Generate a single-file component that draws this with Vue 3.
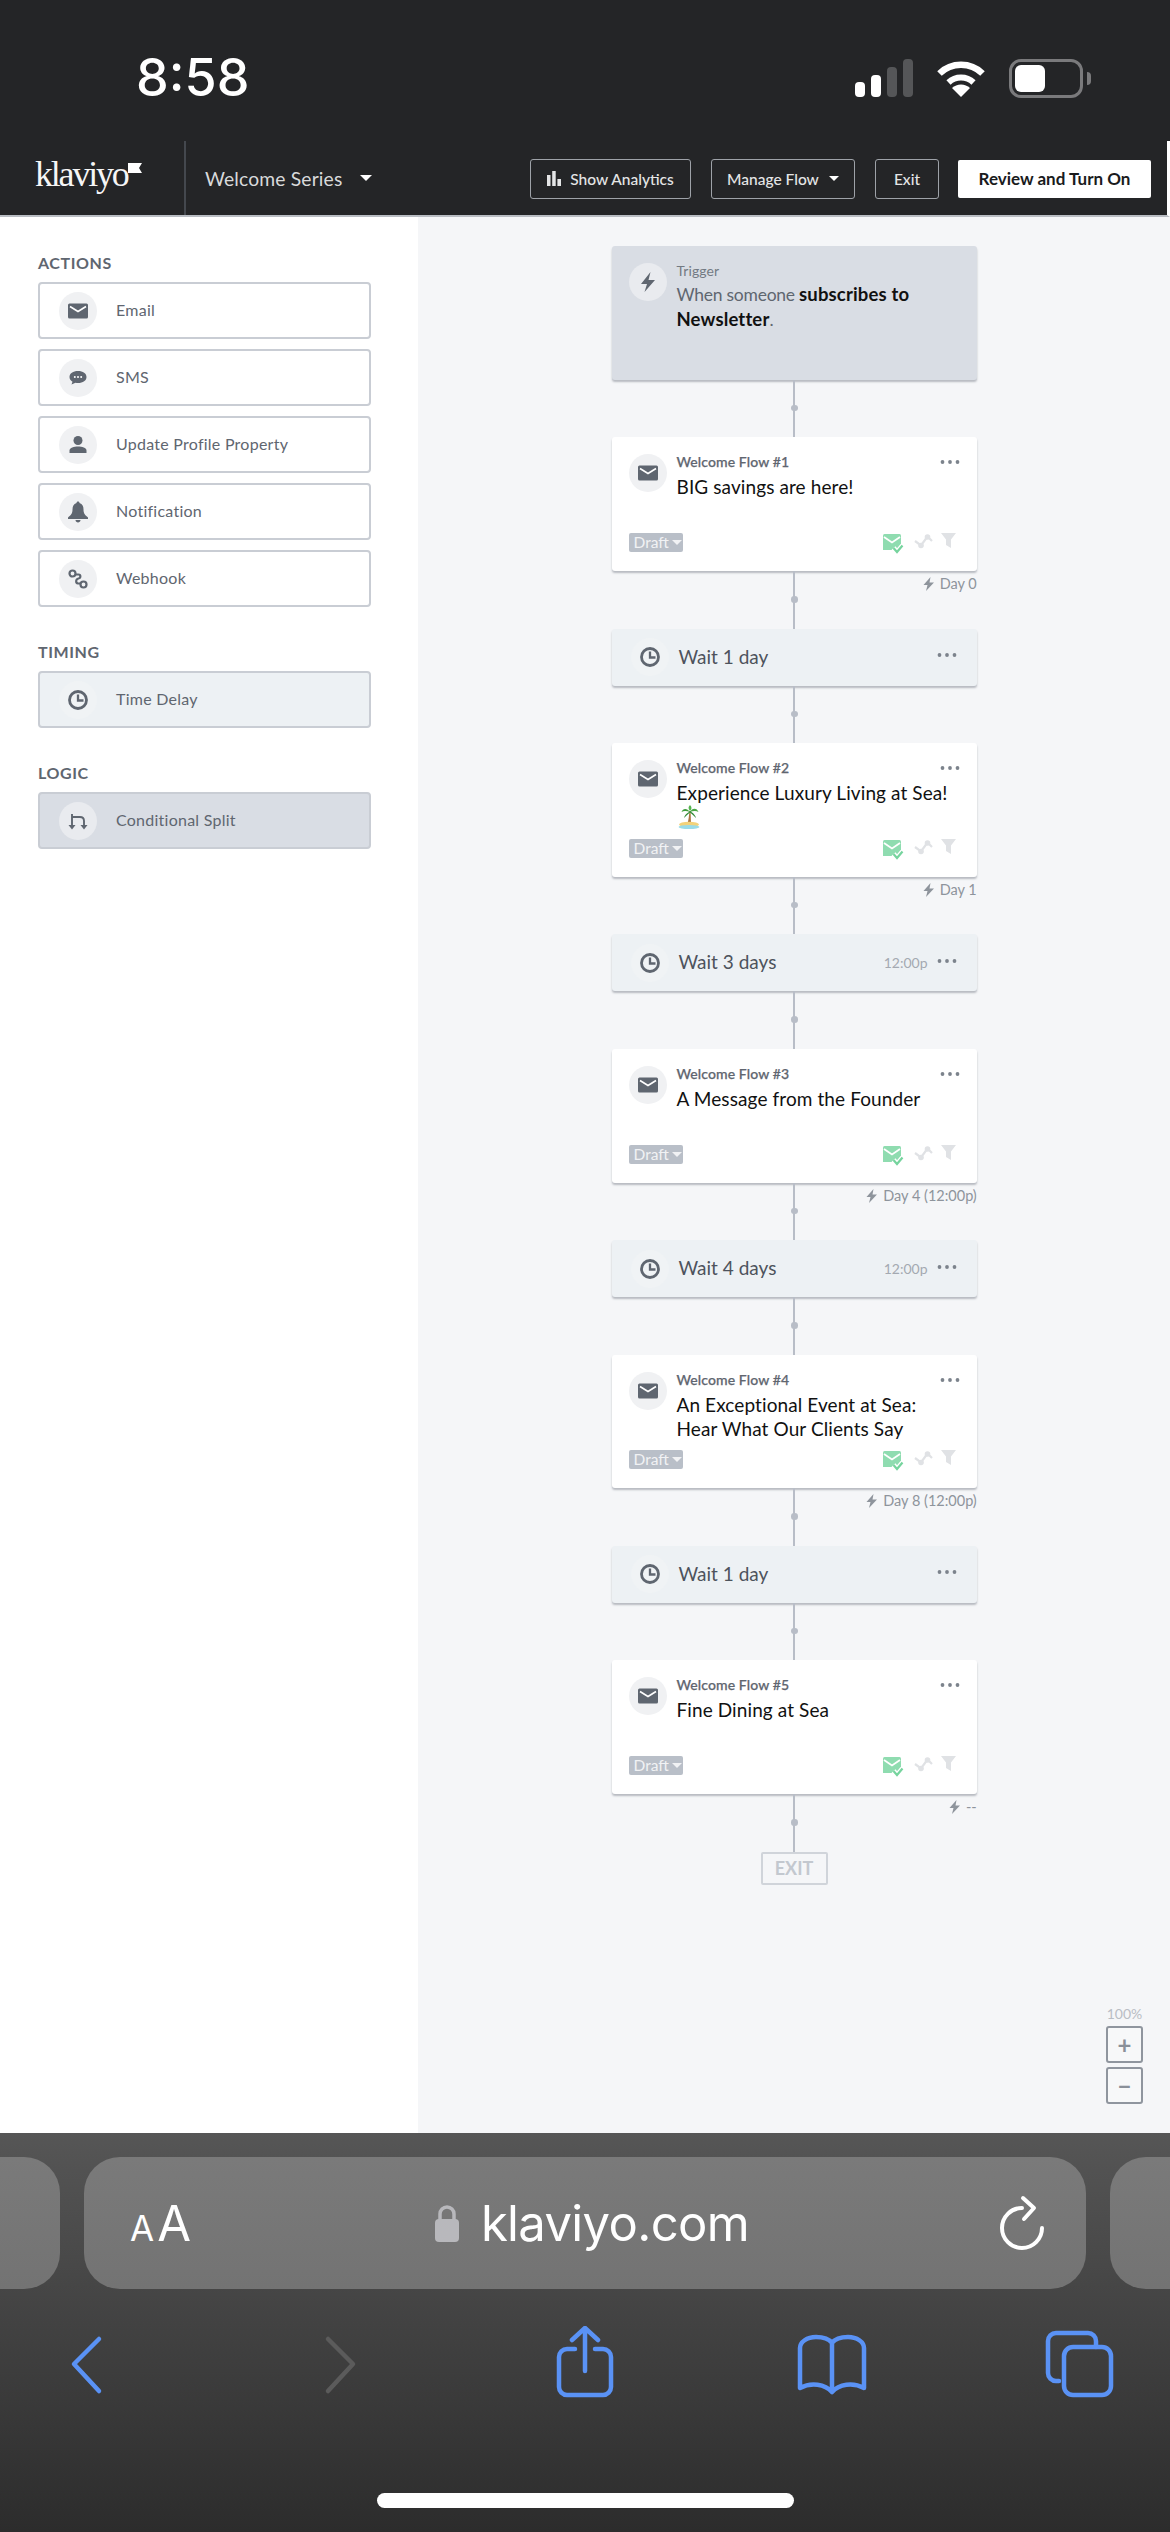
<template>
  <div class="screen">
    <!-- iOS status bar -->
    <div class="status">
      <span class="time">8:58</span>
      <div class="status-icons">
        <svg width="58" height="38" viewBox="0 0 58 38">
          <rect x="0" y="23" width="10" height="15" rx="4" fill="#fff" />
          <rect x="16" y="16" width="10" height="22" rx="4" fill="#fff" />
          <rect x="32" y="8" width="10" height="30" rx="4" fill="#555658" />
          <rect x="48" y="0" width="10" height="38" rx="4" fill="#555658" />
        </svg>
        <svg class="wifi" width="50" height="38" viewBox="0 0 50 38">
          <path d="M3.5 14.5A31 31 0 0 1 46.5 14.5" fill="none" stroke="#fff" stroke-width="6.5" />
          <path d="M12.5 23.5A18 18 0 0 1 37.500 23.500" fill="none" stroke="#fff" stroke-width="6" />
          <path d="M25 38L16 29A13 13 0 0 1 34 29Z" fill="#fff" />
        </svg>
        <div class="battery"><div class="battery-fill"></div></div>
        <div class="battery-nub"></div>
      </div>
    </div>

    <!-- Klaviyo top bar -->
    <header class="topnav">
      <div class="logo">
        <span class="logo-text">klaviyo</span>
        <svg class="logo-flag" width="14" height="10" viewBox="0 0 14 10"><path d="M0 0H14L11 5L14 10H0Z" fill="#fff" /></svg>
      </div>
      <div class="flow-name">Welcome Series <i class="caret caret-name"></i></div>
      <div class="nav-actions">
        <button class="nav-btn btn-analytics">
          <svg width="14" height="15" viewBox="0 0 14 15"><path d="M0 4H3.500V15H0ZM5.200 0H8.700V15H5.200ZM10.400 8H14V15H10.400Z" fill="#e4e5e6" /></svg>
          Show Analytics
        </button>
        <button class="nav-btn btn-manage">Manage Flow <i class="caret caret-btn"></i></button>
        <button class="nav-btn btn-exit">Exit</button>
        <button class="nav-primary">Review and Turn On</button>
      </div>
    </header>

    <div class="workspace">
      <!-- Left component palette -->
      <aside class="sidebar">
        <section v-for="group in palette" :key="group.title" class="group">
          <h4 class="group-title">{{ group.title }}</h4>
          <div class="group-list">
            <div v-for="item in group.items" :key="item.name" :class="['tile', group.tone]">
              <span class="tile-icon">
                <svg width="24" height="24" viewBox="0 0 24 24" v-html="icons[item.icon]"></svg>
              </span>
              <span class="tile-name">{{ item.name }}</span>
            </div>
          </div>
        </section>
      </aside>

      <!-- Flow canvas -->
      <main class="canvas">
        <div class="card trigger">
          <div class="card-head">
            <span class="round-icon trigger-icon">
              <svg width="24" height="24" viewBox="0 0 24 24" v-html="icons.bolt"></svg>
            </span>
            <div class="card-text">
              <div class="card-label trigger-label">Trigger</div>
              <div class="trigger-copy">When someone <b>subscribes to</b> <b>Newsletter</b>.</div>
            </div>
          </div>
        </div>

        <template v-for="step in steps" :key="step.label">
          <div class="link"></div>
          <div class="card">
            <div class="card-head">
              <span class="round-icon">
                <svg width="24" height="24" viewBox="0 0 24 24" v-html="icons.mail"></svg>
              </span>
              <div class="card-text">
                <div class="card-label">{{ step.label }}</div>
                <div class="card-title">
                  {{ step.title }}
                  <svg v-if="step.island" class="island" width="24" height="24" viewBox="0 0 24 24">
                    <path d="M12.500 6C12 11 11.500 15 10.500 19H14C13.800 14 13.800 10 13.500 6Z" fill="#a9743f" />
                    <path d="M13 7C10 3 6 3 4.500 7C7 5.500 10 6 13 7Z" fill="#3f9b3c" />
                    <path d="M13 7C15 2.500 20 2.500 21.500 7C19 5.500 16 6 13 7Z" fill="#4aa845" />
                    <path d="M13 6C11 8 8 9 7 13C9 11 11 9 13.500 7Z" fill="#2f8a35" />
                    <path d="M13 6C15 7.500 18 9 19 13C17 11 15 9 12.500 7Z" fill="#2f8a35" />
                    <path d="M13 6C11 3.500 11 2 13 0C15 2 15 4 13 6Z" fill="#56b44d" />
                    <ellipse cx="12" cy="19.500" rx="10" ry="2.800" fill="#f3d27a" />
                    <ellipse cx="12" cy="22" rx="10.500" ry="2" fill="#9adbe8" />
                  </svg>
                </div>
              </div>
              <svg class="menu card-menu" width="20" height="6" viewBox="0 0 20 6">
                <circle cx="2.500" cy="3" r="1.900" /><circle cx="10" cy="3" r="1.900" /><circle cx="17.500" cy="3" r="1.900" />
              </svg>
            </div>
            <div class="card-foot">
              <span class="draft">Draft <i class="caret caret-draft"></i></span>
              <svg width="74" height="24" viewBox="0 0 74 24">
                <path d="M0 2.500Q0 1 1.500 1H16.500Q18 1 18 2.500V17H0Z" fill="#8fdcb0" />
                <path d="M1 4L9 9.500L17 4" fill="none" stroke="#fff" stroke-width="1.800" />
                <path d="M10.500 15L14 19L19.500 12.500" fill="none" stroke="#fff" stroke-width="5" />
                <path d="M10.500 15L14 19L19.500 12.500" fill="none" stroke="#76d49e" stroke-width="2.200" />
                <path d="M32 8L38 12.500L44.500 3.500L49 8" fill="none" stroke="#e0e2e5" stroke-width="2.200" />
                <circle cx="38" cy="12.500" r="2.800" fill="#e0e2e5" /><circle cx="44.500" cy="4" r="2.800" fill="#e0e2e5" />
                <path d="M58 0H73L68 6.500V15L63 12V6.500Z" fill="#e0e2e5" />
              </svg>
            </div>
          </div>
          <div class="link">
            <span class="day">
              <svg width="12" height="14" viewBox="0 0 12 14"><path d="M7.500 0L0.500 8H4.500L3 14L11 5.500H6.500Z" fill="#8e949c" /></svg>
              {{ step.day }}
            </span>
          </div>
          <div v-if="step.wait" class="card wait">
            <span class="round-icon wait-icon">
              <svg width="24" height="24" viewBox="0 0 24 24" v-html="icons.clock"></svg>
            </span>
            <span class="wait-text">{{ step.wait }}</span>
            <span v-if="step.at" class="wait-at">{{ step.at }}</span>
            <svg class="menu wait-menu" width="20" height="6" viewBox="0 0 20 6">
              <circle cx="2.500" cy="3" r="1.900" /><circle cx="10" cy="3" r="1.900" /><circle cx="17.500" cy="3" r="1.900" />
            </svg>
          </div>
        </template>
        <div class="exit-box">EXIT</div>

        <div class="zoom">
          <span class="zoom-level">100%</span>
          <button class="zoom-btn">+</button>
          <button class="zoom-btn">−</button>
        </div>
      </main>
    </div>

    <!-- Safari chrome -->
    <footer class="safari">
      <div class="url-row">
        <div class="pill pill-side pill-left"></div>
        <div class="pill pill-main">
          <span class="aa"><small>A</small>A</span>
          <span class="address">
            <svg width="26" height="38" viewBox="0 0 26 38">
              <path d="M6 17V10a7 7 0 0 1 14 0V17" fill="none" stroke="#b8b8bc" stroke-width="3.500" />
              <rect x="1" y="15" width="24" height="23" rx="4" fill="#b8b8bc" />
            </svg>
            klaviyo.com
          </span>
          <svg width="48" height="56" viewBox="0 0 48 56">
            <path d="M24 13A20 20 0 1 0 44 33" fill="none" stroke="#fff" stroke-width="4" stroke-linecap="round" />
            <path d="M25 3L36 13L26 24" fill="none" stroke="#fff" stroke-width="4" stroke-linecap="round" stroke-linejoin="round" />
          </svg>
        </div>
        <div class="pill pill-side pill-right"></div>
      </div>
      <div class="tools">
        <svg width="34" height="76" viewBox="0 0 34 76"><path d="M30 13L5 38L30 65" class="tool" /></svg>
        <svg width="34" height="76" viewBox="0 0 34 76"><path d="M4 13L29 38L4 65" class="tool tool-off" /></svg>
        <svg width="60" height="76" viewBox="0 0 60 76">
          <path d="M20 23H12a8 8 0 0 0-8 8v30a8 8 0 0 0 8 8h36a8 8 0 0 0 8-8V31a8 8 0 0 0-8-8H40M30 45V2M17 14L30 2L43 14" class="tool" />
        </svg>
        <svg width="74" height="76" viewBox="0 0 74 76">
          <path d="M5 62V22C5 16 12 11 21 11C28 11 34 13 37 17C40 13 46 11 53 11C62 11 69 16 69 22V62C58 56 44 58 37 66C30 58 16 56 5 62ZM37 17V66" class="tool" />
        </svg>
        <svg width="72" height="76" viewBox="0 0 72 76">
          <path d="M15 55H12a8 8 0 0 1-8-8V15a8 8 0 0 1 8-8H44a8 8 0 0 1 8 8V21" class="tool" />
          <rect x="20" y="21" width="47" height="48" rx="9" class="tool" />
        </svg>
      </div>
      <div class="home-bar"></div>
    </footer>
  </div>
</template>

<script setup>
const icons = {
  mail: '<rect x="2" y="4.500" width="20" height="15" rx="1.500" fill="#5f6670"/><path d="M4 7.500L12 12.500L20 7.500" fill="none" stroke="#fff" stroke-width="1.600"/>',
  sms: '<path d="M12 5C7 5 3.500 7.500 3.500 11C3.500 13 4.700 14.700 6.500 15.800L5.500 18.500L9.500 16.700C10.300 16.900 11.100 17 12 17C17 17 20.500 14.500 20.500 11S17 5 12 5Z" fill="#5f6670"/><circle cx="8.800" cy="11" r="1" fill="#fff"/><circle cx="12" cy="11" r="1" fill="#fff"/><circle cx="15.200" cy="11" r="1" fill="#fff"/>',
  user: '<circle cx="12" cy="7.500" r="4.500" fill="#5f6670"/><path d="M3.500 20V17.500C3.500 14.800 8 13.500 12 13.500S20.500 14.800 20.500 17.500V20Z" fill="#5f6670"/>',
  bell: '<path d="M12 1.500C13 1.500 13.500 2.200 13.500 3C16.500 4 17.500 6.500 17.500 9.500C17.500 13.500 19 15 22 17.500V19H2V17.500C5 15 6.500 13.500 6.500 9.500C6.500 6.500 7.500 4 10.500 3C10.500 2.200 11 1.500 12 1.500Z" fill="#5f6670"/><path d="M9.500 20H14.500C14.500 21.500 13.300 22.500 12 22.500S9.500 21.500 9.500 20Z" fill="#5f6670"/>',
  hook: '<g fill="none" stroke="#5f6670" stroke-width="2.200"><circle cx="6.500" cy="6.500" r="3"/><circle cx="17.500" cy="17.500" r="3"/><path d="M9.500 7.500H12.500C15 7.500 15 11 12.500 11.500C9.500 12 9.500 16 12 16.500H14.500"/></g>',
  clock: '<circle cx="12" cy="12" r="8.500" fill="none" stroke="#5f6670" stroke-width="2.800"/><path d="M12 6.500V12.500H17.500" fill="none" stroke="#5f6670" stroke-width="2.300"/>',
  split: '<g fill="none" stroke="#5f6670" stroke-width="1.900"><path d="M6 5V18M6 8H14C16.500 8 18 9.500 18 12V18"/></g><path d="M2.500 16H9.500L6 20.500ZM14.500 16H21.500L18 20.500Z" fill="#5f6670"/>',
  bolt: '<path d="M14.500 2L5 14H11L8.500 22L19 10H12.500Z" fill="#5f6670"/>'
}

const palette = [
  {
    title: 'ACTIONS',
    tone: '',
    items: [
      { name: 'Email', icon: 'mail' },
      { name: 'SMS', icon: 'sms' },
      { name: 'Update Profile Property', icon: 'user' },
      { name: 'Notification', icon: 'bell' },
      { name: 'Webhook', icon: 'hook' }
    ]
  },
  { title: 'TIMING', tone: 'tile-timing', items: [{ name: 'Time Delay', icon: 'clock' }] },
  { title: 'LOGIC', tone: 'tile-logic', items: [{ name: 'Conditional Split', icon: 'split' }] }
]

const steps = [
  { label: 'Welcome Flow #1', title: 'BIG savings are here!', day: 'Day 0', wait: 'Wait 1 day' },
  { label: 'Welcome Flow #2', title: 'Experience Luxury Living at Sea!', island: true, day: 'Day 1', wait: 'Wait 3 days', at: '12:00p' },
  { label: 'Welcome Flow #3', title: 'A Message from the Founder', day: 'Day 4 (12:00p)', wait: 'Wait 4 days', at: '12:00p' },
  { label: 'Welcome Flow #4', title: 'An Exceptional Event at Sea: Hear What Our Clients Say', day: 'Day 8 (12:00p)', wait: 'Wait 1 day' },
  { label: 'Welcome Flow #5', title: 'Fine Dining at Sea', day: '--' }
]
</script>

<style scoped>
.screen {
  width: 1170px;
  height: 2532px;
  display: flex;
  flex-direction: column;
  overflow: hidden;
  font-family: Lato, "Open Sans", sans-serif;
  background: #fff;
}

/* status bar */
.status {
  height: 141px;
  box-sizing: border-box;
  background: #242527;
  display: flex;
  padding: 58px 79px 0 136px;
  justify-content: space-between;
}
.time {
  font-family: Inter, sans-serif;
  font-weight: 500;
  font-size: 52px;
  line-height: 40px;
  color: #fff;
}
.status-icons {
  display: flex;
  align-items: center;
  height: 40px;
}
.wifi { margin-left: 23px; }
.battery {
  width: 74px;
  height: 39px;
  box-sizing: border-box;
  margin-left: 23px;
  border: 3px solid #7a7a7c;
  border-radius: 12px;
  padding: 3px;
}
.battery-fill {
  width: 30px;
  height: 27px;
  background: #fff;
  border-radius: 6px;
}
.battery-nub {
  width: 4px;
  height: 13px;
  margin-left: 4px;
  background: #7a7a7c;
  border-radius: 0 6px 6px 0;
}

/* top nav */
.topnav {
  height: 76px;
  box-sizing: border-box;
  background: #242527;
  border-bottom: 2px solid #b9bdc3;
  border-right: 3px solid #fff;
  display: flex;
  align-items: center;
}
.logo {
  width: 186px;
  height: 100%;
  box-sizing: border-box;
  border-right: 2px solid #44484e;
  padding: 13px 0 0 35px;
  display: flex;
  align-items: flex-start;
}
.logo-text {
  font-family: "Liberation Serif", serif;
  font-size: 36px;
  line-height: 40px;
  letter-spacing: -2.200px;
  color: #f6f6f6;
}
.logo-flag {
  margin: 9px 0 0 0;
}
.flow-name {
  margin-left: 19px;
  font-size: 19.300px;
  letter-spacing: 0.150px;
  color: #d9dadb;
  display: flex;
  align-items: center;
}
.caret {
  display: inline-block;
  width: 0;
  height: 0;
  border-style: solid;
  border-color: currentColor transparent transparent;
}
.caret-name {
  border-width: 6px 6px 0;
  margin-left: 18px;
  color: #fff;
}
.nav-actions {
  margin-left: auto;
  margin-right: 16px;
  display: flex;
  align-items: center;
  gap: 20px;
  padding-top: 1px;
}
.nav-btn {
  height: 40px;
  box-sizing: border-box;
  background: none;
  border: 1.500px solid #9ea2a8;
  border-radius: 3px;
  color: #e4e5e6;
  font-family: inherit;
  font-size: 15.500px;
  font-weight: 500;
  padding: 0;
  display: flex;
  align-items: center;
  justify-content: center;
}
.btn-analytics { width: 161px; gap: 9px; }
.btn-manage { width: 144px; gap: 10px; }
.btn-exit { width: 64px; }
.caret-btn { border-width: 5px 5px 0; color: #fff; }
.nav-primary {
  width: 193px;
  height: 38px;
  margin-left: -1px;
  padding: 0;
  background: #fff;
  border: 0;
  border-radius: 2px;
  color: #1a1b1d;
  font-family: inherit;
  font-size: 17px;
  font-weight: 700;
}

.workspace {
  flex: 1;
  min-height: 0;
  display: flex;
}

/* palette */
.sidebar {
  width: 418px;
  box-sizing: border-box;
  padding: 36px 47px 0 38px;
  display: flex;
  flex-direction: column;
  gap: 35px;
}
.group-title {
  margin: 0 0 9px;
  font-size: 16px;
  line-height: 20px;
  font-weight: 700;
  letter-spacing: 0.6px;
  color: #5f6670;
}
.group-list {
  display: flex;
  flex-direction: column;
  gap: 10px;
}
.tile {
  height: 57px;
  box-sizing: border-box;
  border: 2px solid #c9cdd4;
  border-radius: 4px;
  padding-left: 19px;
  display: flex;
  align-items: center;
  gap: 19px;
  background: #fff;
}
.tile-timing { background: #edf1f4; }
.tile-timing .tile-icon { background: #f0f3f5; }
.tile-logic { background: #d9dde4; }
.tile-logic .tile-icon { background: #e9ebef; }
.tile-icon, .round-icon {
  width: 38px;
  height: 38px;
  flex: none;
  border-radius: 50%;
  background: #f0f1f3;
  display: flex;
  align-items: center;
  justify-content: center;
}
.tile-name {
  padding-bottom: 2px;
  font-size: 16px;
  letter-spacing: 0.250px;
  color: #5f6670;
}

/* canvas */
.canvas {
  position: relative;
  flex: 1;
  background: #f5f6f8;
  padding-top: 29px;
  display: flex;
  flex-direction: column;
  align-items: center;
}
.card {
  width: 365px;
  height: 133.750px;
  box-sizing: border-box;
  flex: none;
  padding: 17px 17px 14px;
  background: #fff;
  border-radius: 3px;
  box-shadow: 0 2px 2px rgba(90, 98, 110, 0.4);
  display: flex;
  flex-direction: column;
}
.card-head {
  display: flex;
  align-items: flex-start;
}
.card-text {
  margin-left: 10px;
  flex: 1;
  min-width: 0;
}
.card-label {
  font-size: 14px;
  line-height: 16px;
  font-weight: 500;
  letter-spacing: 0.100px;
  color: #5f6670;
  -webkit-text-stroke: 0.25px #5f6670;
}
.card-title {
  margin-top: 5px;
  font-size: 19px;
  line-height: 24px;
  letter-spacing: 0.100px;
  color: #111;
}
.island {
  display: inline-block;
  vertical-align: top;
}
.menu {
  flex: none;
  margin-top: 5px;
  fill: #7c838c;
}
.card-menu {
  margin-left: -20px;
}
.card-foot {
  margin-top: auto;
  display: flex;
  justify-content: space-between;
  align-items: flex-start;
  padding-right: 3px;
}
.draft {
  width: 54px;
  height: 19px;
  box-sizing: border-box;
  padding-left: 5px;
  background: #b9bfc8;
  border-radius: 2px;
  color: #f1f2f4;
  font-size: 15.500px;
  line-height: 19px;
  display: flex;
  align-items: center;
}
.caret-draft {
  border-width: 5px 5px 0;
  margin-left: 3px;
}
.trigger { background: #d9dde4; }
.trigger-icon { background: #e9ebef; }
.trigger-label {
  color: #737a83;
  font-weight: 400;
  -webkit-text-stroke: 0;
}
.trigger-copy {
  margin-top: 3px;
  font-size: 17.500px;
  line-height: 24px;
  letter-spacing: -0.250px;
  color: #5f6670;
}
.trigger-copy b {
  color: #111;
  font-size: 18.500px;
  font-weight: 700;
  letter-spacing: 0.150px;
}
.link {
  position: relative;
  width: 1.500px;
  height: 57.500px;
  flex: none;
  background: #b8bdc7;
}
.link::after {
  content: "";
  position: absolute;
  left: -2px;
  top: 25px;
  width: 6.500px;
  height: 6.500px;
  border-radius: 50%;
  background: #b8bdc7;
}
.day {
  position: absolute;
  right: -182px;
  top: 5px;
  white-space: nowrap;
  display: flex;
  align-items: center;
  gap: 5px;
  font-size: 14.500px;
  line-height: 16px;
  color: #8e949c;
}
.wait {
  height: 57px;
  padding: 0 20px 0 19px;
  flex-direction: row;
  align-items: center;
  background: #edf1f4;
}
.wait-icon { background: #f0f3f5; }
.wait-text {
  margin-left: 10px;
  padding-bottom: 2px;
  font-size: 19px;
  color: #4d535c;
}
.wait-at {
  margin-left: auto;
  font-size: 14px;
  color: #a4a9b1;
}
.wait-menu {
  margin: -4px 0 0 9px;
}
.wait-text + .wait-menu {
  margin-left: auto;
}
.exit-box {
  width: 67px;
  height: 33px;
  box-sizing: border-box;
  flex: none;
  border: 2px solid #d0d4da;
  border-radius: 2px;
  color: #c3c8cf;
  font-size: 18px;
  font-weight: 700;
  line-height: 29px;
  text-align: center;
}
.zoom {
  position: absolute;
  right: 27px;
  bottom: 29px;
  display: flex;
  flex-direction: column;
  align-items: center;
  gap: 4px;
}
.zoom-level {
  font-size: 14px;
  line-height: 16px;
  color: #b9bdc4;
}
.zoom-btn {
  width: 37px;
  height: 37px;
  box-sizing: border-box;
  padding: 0;
  background: #f7f8f9;
  border: 2px solid #8f959e;
  border-radius: 3px;
  color: #8a9099;
  font-family: inherit;
  font-size: 24px;
  font-weight: 700;
  line-height: 30px;
}

/* safari */
.safari {
  height: 399px;
  box-sizing: border-box;
  padding-top: 24px;
  background: linear-gradient(#565656, #2c2c2c);
  display: flex;
  flex-direction: column;
}
.url-row {
  display: flex;
  gap: 24px;
}
.pill {
  height: 132px;
  background: linear-gradient(#7a7a7a, #737373);
}
.pill-side { flex: 1; }
.pill-left { border-radius: 0 36px 36px 0; }
.pill-right { border-radius: 36px 0 0 36px; }
.pill-main {
  width: 1002px;
  flex: none;
  box-sizing: border-box;
  padding: 0 40px 0 46px;
  border-radius: 36px;
  display: flex;
  align-items: center;
  justify-content: space-between;
  color: #fff;
  font-family: Inter, sans-serif;
}
.aa {
  font-size: 49px;
  line-height: 1;
}
.aa small {
  font-size: 35px;
  margin-right: 3px;
}
.address {
  display: flex;
  align-items: center;
  gap: 21px;
  font-size: 49px;
  letter-spacing: -0.650px;
  margin-left: -6px;
}
.tools {
  margin-top: 37px;
  display: grid;
  grid-template-columns: 172px 338px 150px 344px 152px;
  justify-items: center;
}
.tool {
  fill: none;
  stroke: #5a92f5;
  stroke-width: 4.500;
  stroke-linecap: round;
  stroke-linejoin: round;
}
.tool-off { stroke: #5b5b5b; }
.home-bar {
  width: 417px;
  height: 15px;
  margin: auto auto 24px;
  border-radius: 8px;
  background: #fff;
}
</style>

<style>
body { background: #fff; }
</style>
